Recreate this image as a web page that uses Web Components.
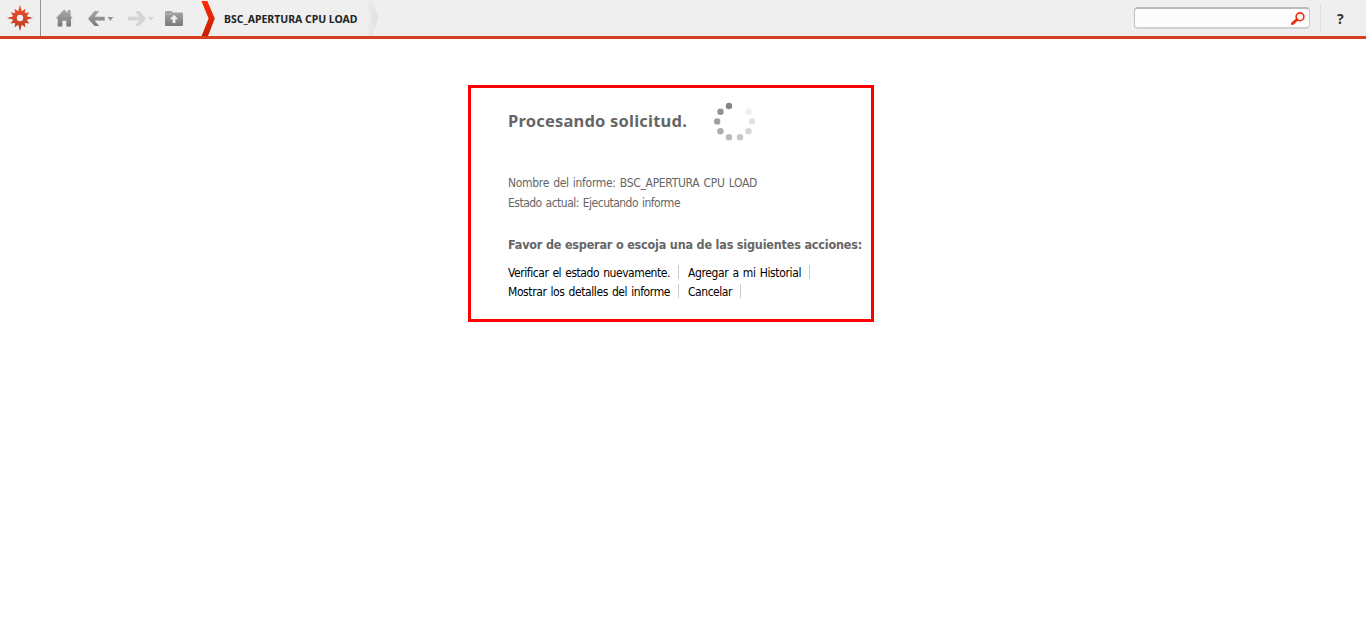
<!DOCTYPE html>
<html lang="es">
<head>
<meta charset="utf-8">
<title>BSC_APERTURA CPU LOAD</title>
<style>
html,body{margin:0;background:#fff;height:100%;overflow:hidden}
body{font-family:"DejaVu Sans Condensed","DejaVu Sans",Tahoma,sans-serif}
</style>
</head>
<body>
<report-page></report-page>
<script>
const define=(name,html,ready)=>customElements.define(name,class extends HTMLElement{
  connectedCallback(){
    if(this.shadowRoot)return;
    const t=document.createElement('template');
    t.innerHTML=html;
    this.attachShadow({mode:'open'}).append(t.content.cloneNode(true));
    if(ready)ready(this);
  }
});

// Text line whose tracking is adjusted to a given measure
define('text-line','<style>:host{display:block;white-space:nowrap;width:max-content}span{display:inline-block}</style><span><slot></slot></span>',el=>{
  const span=el.shadowRoot.querySelector('span');
  const n=el.textContent.length;
  const gap=(+el.getAttribute('measure')-span.getBoundingClientRect().width)/n;
  span.style.letterSpacing=gap.toFixed(3)+'px';
});

define('brand-star',`<style>:host{display:block;width:40px;height:36px;border-right:1px solid #949494}svg{display:block}</style>
<svg width="40" height="36"><defs><linearGradient id="g" x2="0" y2="1"><stop stop-color="#f2502d"/><stop offset="1" stop-color="#b93a24"/></linearGradient></defs>
<path fill="url(#g)" fill-rule="evenodd"/></svg>`,el=>{
  const cx=20,cy=18;
  let d='';
  for(let i=0;i<24;i++){
    const a=-Math.PI/2+i*Math.PI/12;
    const r=i%2?6.9:(i%6===0?13.2:10.8);
    d+=(i?'L':'M')+(cx+r*Math.cos(a)).toFixed(2)+' '+(cy+r*Math.sin(a)).toFixed(2);
  }
  el.shadowRoot.querySelector('path').setAttribute('d',d+'ZM23.2 18a3.2 3.2 0 1 0-6.4 0a3.2 3.2 0 1 0 6.4 0Z');
});

define('nav-icons',`<style>:host{display:block;width:160px;height:36px}svg{display:block}</style>
<svg width="160" height="36"><defs><linearGradient id="g" gradientUnits="userSpaceOnUse" x1="0" y1="9" x2="0" y2="27"><stop stop-color="#adadad"/><stop offset="1" stop-color="#777"/></linearGradient></defs>
<g fill="url(#g)"><path d="M14.7 18.6 23.3 9.3 26.7 12.9V10H29.6V16L31.8 18.6H30V26.5H25.3V20.7H21.4V26.5H16.7V18.6Z"/>
<path d="M53.5 11H58.2L53.7 16.7H63.7V20.6H53.7L58.2 26H53.5L47 18.7Z"/><path d="M66.5 17H72.3L69.4 20.8Z"/>
<path fill-rule="evenodd" d="M124 11.5Q124 11 124.6 11H130.5L132 12.6H140.8Q142 12.6 142 13.8V25Q142 26.1 140.9 26.1H125Q124 26.1 124 25ZM133 14.8 128.8 19.3H131.6V23H134.4V19.3H137.2Z"/></g>
<path d="M124.3 14.2H129.6L131 12.8" fill="none" stroke="#d5d5d5" stroke-width=".6"/>
<g fill="#d4d4d4"><path d="M98.5 11H94L98.4 16.8H87V20.6H98.4L94 26H98.5L105 18.7Z"/><path d="M107 17H113L110 20.8Z"/></g></svg>`);

define('crumb-trail',`<style>:host{display:flex;height:36px;font:bold 10.5px "Noto Sans","Open Sans",sans-serif;color:#222}
svg{display:block;flex:none}text-line{margin:1px 0 0 8px;line-height:36px;height:35px}.end{margin-left:7px}</style>
<svg width="15" height="36"><defs><linearGradient id="r" x2="0" y2="1"><stop stop-color="#ff2b08"/><stop offset="1" stop-color="#c51f05"/></linearGradient></defs><path fill="url(#r)" d="M.4 1H6.3L13.8 18.5 7 36H.6L7.6 18.5Z"/></svg>
<text-line measure="133.5">BSC_APERTURA CPU LOAD</text-line>
<svg class="end" width="16" height="36"><defs><linearGradient id="s"><stop stop-color="#efefef"/><stop offset="1" stop-color="#dfdfdf"/></linearGradient></defs><path fill="url(#s)" d="M0 1H7L13.4 17.5 7 36H0L5 18Z"/></svg>`);

define('search-box',`<style>:host{display:flex;justify-content:flex-end;box-sizing:border-box;width:176px;height:22px;background:#fcfcfc;border:solid;border-width:2px 1px;border-color:#bbb #ccc #d0d0d0 #c0c0c0;border-radius:4px}svg{display:block}</style>
<svg width="22" height="18"><circle cx="13" cy="7.8" r="3.9" fill="none" stroke="#f42b0b" stroke-width="1.6"/><path d="M9.9 10.7 5.4 14.6" stroke="#f42b0b" stroke-width="2.8" stroke-linecap="round"/></svg>`);

define('top-bar',`<style>:host{display:flex;height:36px;background:#efefef;border:solid #d84023;border-image:linear-gradient(#cb3920,#e9502b,#d63d20) 3;border-width:0 0 3px}
crumb-trail{flex:1}search-box{margin:7px 10px 0 0}.help{width:46px;height:28px;margin-top:5px;box-sizing:border-box;border-left:1px solid #dcdcdc;padding:3px 0 0 16px;font:bold 14px/22px "Noto Sans","Open Sans",sans-serif;color:#303330}</style>
<brand-star></brand-star><nav-icons></nav-icons><crumb-trail></crumb-trail><search-box></search-box><div class="help">?</div>`);

define('wait-spinner',`<style>:host{display:block;width:44px;height:40px}svg{display:block}</style>
<svg width="44" height="40"><circle cx="16" cy="4" r="3.2" fill="#858585"/><circle cx="7.5" cy="9.7" r="3.2" fill="#929292"/><circle cx="4.2" cy="19.4" r="3.2" fill="#9f9f9f"/><circle cx="7.4" cy="29.2" r="3.2" fill="#adadad"/><circle cx="16" cy="35.2" r="3.2" fill="#b9b9b9"/><circle cx="27" cy="35.2" r="3.2" fill="#c7c7c7"/><circle cx="35.5" cy="29.2" r="3.2" fill="#d5d5d5"/><circle cx="39" cy="19.4" r="3.2" fill="#e2e2e2"/><circle cx="35.7" cy="9.8" r="3.2" fill="#efefef"/></svg>`);

define('action-link','<style>:host{display:block;border-right:1px solid #ccc;height:14px;padding-right:8px;line-height:16px;color:#000}</style><slot></slot>');

define('wait-panel',`<style>:host{display:block;box-sizing:border-box;width:406px;height:237px;margin:46px 0 0 468px;border:3px solid red;padding:14px 0 0 37px;font-size:12px;color:#666}
.head{display:flex;height:40px;gap:26px;font:bold 16.5px/38px "Noto Sans","Open Sans",sans-serif}
.info{margin-top:31px;line-height:20px;word-spacing:1px}.ask{margin-top:22px;font-weight:bold;font-size:12.5px;line-height:20px}
.row{display:flex;gap:9px;margin-top:5px;word-spacing:1px}.ask+.row{margin-top:10px}</style>
<div class="head"><text-line measure="179">Procesando solicitud.</text-line><wait-spinner></wait-spinner></div>
<div class="info"><text-line measure="249">Nombre del informe: BSC_APERTURA CPU LOAD</text-line><text-line measure="172">Estado actual: Ejecutando informe</text-line></div>
<div class="ask"><text-line measure="354">Favor de esperar o escoja una de las siguientes acciones:</text-line></div>
<div class="row"><action-link><text-line measure="162">Verificar el estado nuevamente.</text-line></action-link><action-link><text-line measure="113">Agregar a mi Historial</text-line></action-link></div>
<div class="row"><action-link><text-line measure="162">Mostrar los detalles del informe</text-line></action-link><action-link><text-line measure="44">Cancelar</text-line></action-link></div>`);

define('report-page','<style>:host{display:block}</style><top-bar></top-bar><wait-panel></wait-panel>');
</script>
</body>
</html>
